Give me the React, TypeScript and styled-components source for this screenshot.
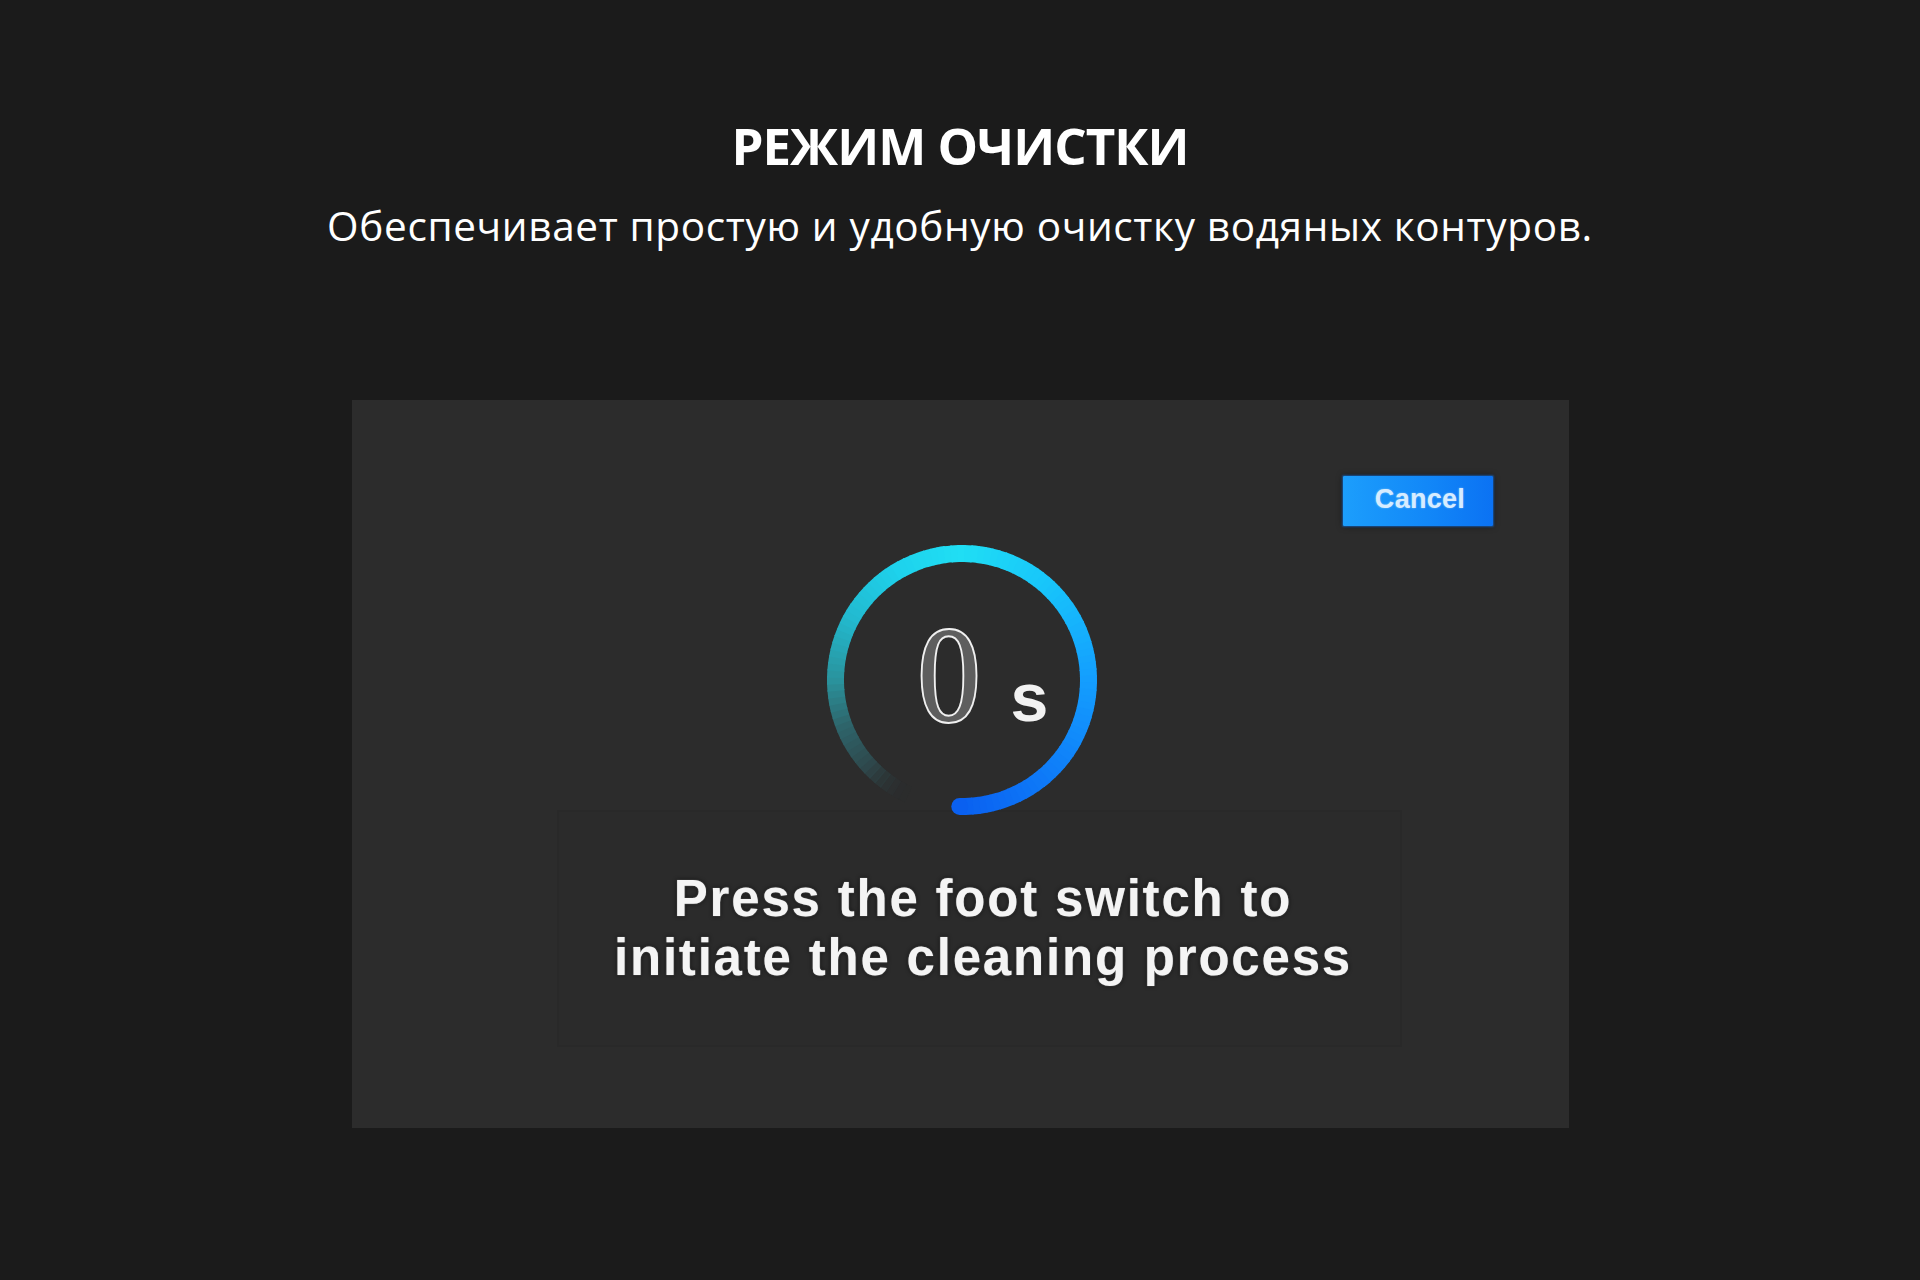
import React from "react";
import styled, { createGlobalStyle } from "styled-components";

const GlobalStyle = createGlobalStyle`
  html, body {
    margin: 0;
    padding: 0;
    background: #1b1b1b;
  }
  body {
    font-family: "Open Sans", "Noto Sans", sans-serif;
  }
`;

const Page = styled.main`
  min-height: 1280px;
  display: flex;
  flex-direction: column;
  align-items: center;
  padding-top: 115px;
  box-sizing: border-box;
`;

const Title = styled.h1`
  margin: 0;
  font-family: "Open Sans", "Noto Sans", sans-serif;
  font-weight: 700;
  font-size: 51px;
  line-height: 1.2;
  color: #ffffff;
  letter-spacing: -1px;
`;

const Subtitle = styled.p`
  margin: 26px 0 0;
  font-family: "Open Sans", "Noto Sans", sans-serif;
  font-weight: 400;
  font-size: 40.5px;
  line-height: 1.2;
  color: #ffffff;
  letter-spacing: 0.65px;
`;

const Panel = styled.section`
  margin-top: 149px;
  width: 1217px;
  height: 728px;
  background: #2c2c2c;
  display: flex;
  flex-direction: column;
  align-items: center;
  margin-left: 1px;
`;

const HeaderRow = styled.div`
  align-self: stretch;
  display: flex;
  justify-content: flex-end;
  padding: 76px 76px 0 0;
`;

const CancelButton = styled.button`
  width: 150px;
  height: 50px;
  border: none;
  border-radius: 1px;
  background: linear-gradient(90deg, #1c9efc 0%, #1288f8 55%, #0b72f3 100%);
  box-shadow: 0 0 2px 1px rgba(20, 120, 240, 0.55), 0 0 6px rgba(0, 0, 0, 0.6);
  color: #d6ecff;
  font-family: "Liberation Sans", Arial, sans-serif;
  font-weight: 700;
  font-size: 27px;
  letter-spacing: 0.3px;
  padding: 0 0 2px 4px;
  cursor: pointer;
  text-shadow: 0 0 2px rgba(230, 245, 255, 0.5);
`;

const Ring = styled.div`
  position: relative;
  margin-top: 19px;
  margin-left: 3px;
  width: 270px;
  height: 270px;
`;

const RingArt = styled.svg`
  position: absolute;
  inset: 0;
`;

const Counter = styled.div`
  position: absolute;
  inset: 0;
  display: flex;
  justify-content: center;
  align-items: baseline;
  gap: 28px;
  padding: 62px 0 0 39px;
  box-sizing: border-box;
  color: #ececec;
`;

const Digit = styled.span`
  font-family: "Liberation Serif", "Times New Roman", serif;
  font-size: 136px;
  line-height: 1;
  color: #5e5e5e;
  -webkit-text-stroke: 4px #f0f0f0;
  paint-order: stroke fill;
  display: inline-block;
  transform: scaleX(0.92);
  filter: blur(0.5px);
`;

const Unit = styled.span`
  font-family: "Liberation Sans", Arial, sans-serif;
  font-weight: 700;
  font-size: 68px;
  line-height: 1;
  color: #f2f2f2;
  filter: blur(0.4px);
`;

const PromptBox = styled.div`
  margin-top: -5px;
  margin-left: 38px;
  width: 845px;
  height: 237px;
  box-sizing: border-box;
  border: 2px solid rgba(0, 0, 0, 0.045);
  background: rgba(0, 0, 0, 0.015);
  display: flex;
  align-items: center;
  justify-content: center;
`;

const Prompt = styled.p`
  margin: 0 0 0 7px;
  text-align: center;
  font-family: "Liberation Sans", Arial, sans-serif;
  font-weight: 700;
  font-size: 51px;
  line-height: 59px;
  letter-spacing: 1.8px;
  color: #f4f4f4;
  text-shadow: 0 0 1.5px rgba(255, 255, 255, 0.45), 0 0 4px rgba(0, 0, 0, 0.8);
`;

type Stop = [number, [number, number, number], number];

const stops: Stop[] = [
  [205, [44, 44, 44], 0],
  [228, [46, 72, 76], 1],
  [250, [46, 102, 108], 1],
  [270, [42, 146, 156], 1],
  [300, [34, 186, 208], 1],
  [330, [30, 210, 236], 1],
  [360, [32, 222, 244], 1],
  [400, [24, 198, 250], 1],
  [450, [20, 158, 254], 1],
  [500, [14, 122, 248], 1],
  [541, [10, 96, 240], 1],
];

function colorAt(t: number): string {
  for (let i = 0; i < stops.length - 1; i++) {
    const [a, ca, oa] = stops[i];
    const [b, cb, ob] = stops[i + 1];
    if (t >= a && t <= b) {
      const f = (t - a) / (b - a);
      const c = ca.map((v, k) => Math.round(v + (cb[k] - v) * f));
      const o = oa + (ob - oa) * f;
      return `rgba(${c[0]},${c[1]},${c[2]},${o.toFixed(3)})`;
    }
  }
  const last = stops[stops.length - 1];
  return `rgb(${last[1].join(",")})`;
}

const CX = 135;
const CY = 135;
const R = 126.5;

function pt(deg: number): [number, number] {
  const rad = (deg * Math.PI) / 180;
  return [CX + R * Math.sin(rad), CY - R * Math.cos(rad)];
}

const START = 205;
const END = 541;
const SEGMENTS = 112;

const segments = Array.from({ length: SEGMENTS }, (_, i) => {
  const a = START + ((END - START) * i) / SEGMENTS;
  const b = START + ((END - START) * (i + 1)) / SEGMENTS + 0.6;
  const [x1, y1] = pt(a);
  const [x2, y2] = pt(Math.min(b, END));
  return {
    d: `M ${x1.toFixed(2)} ${y1.toFixed(2)} A ${R} ${R} 0 0 1 ${x2.toFixed(2)} ${y2.toFixed(2)}`,
    color: colorAt((a + b) / 2),
  };
});

const [capX, capY] = pt(END);

function ProgressRing() {
  return (
    <RingArt width="270" height="270" viewBox="0 0 270 270">
      {segments.map((s, i) => (
        <path key={i} d={s.d} fill="none" stroke={s.color} strokeWidth={17} />
      ))}
      <circle cx={capX} cy={capY} r={8.5} fill="rgb(10,96,240)" />
    </RingArt>
  );
}

export default function App() {
  return (
    <>
      <GlobalStyle />
      <Page>
        <Title>РЕЖИМ ОЧИСТКИ</Title>
        <Subtitle>Обеспечивает простую и удобную очистку водяных контуров.</Subtitle>
        <Panel>
          <HeaderRow>
            <CancelButton type="button">Cancel</CancelButton>
          </HeaderRow>
          <Ring>
            <ProgressRing />
            <Counter>
              <Digit>0</Digit>
              <Unit>s</Unit>
            </Counter>
          </Ring>
          <PromptBox>
            <Prompt>
              Press the foot switch to
              <br />
              initiate the cleaning process
            </Prompt>
          </PromptBox>
        </Panel>
      </Page>
    </>
  );
}
